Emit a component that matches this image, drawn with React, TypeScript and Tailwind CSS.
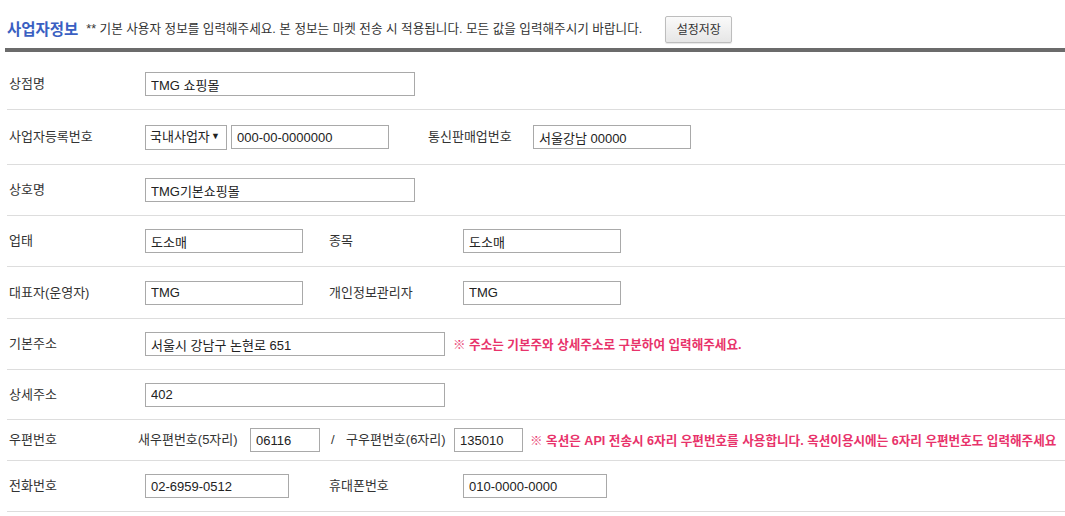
const font = {
  fontFamily: '"Liberation Sans", "Noto Sans CJK KR", sans-serif',
};

function Field({ value, w }: { value: string; w: string }) {
  return (
    <input
      type="text"
      defaultValue={value}
      className={`${w} h-[24px] border border-[#a9a9a9] bg-white px-[5px] text-[13px] text-[#222] outline-none`}
      style={font}
    />
  );
}

function Row({
  label,
  h,
  labelW = "w-[138px]",
  children,
}: {
  label: string;
  h: string;
  labelW?: string;
  children?: React.ReactNode;
}) {
  return (
    <div className={`ml-[7px] flex items-center border-b border-[#dddddd] ${h}`}>
      <div className={`${labelW} shrink-0 pl-[2px] text-[13px] text-[#333]`}>
        {label}
      </div>
      {children}
    </div>
  );
}

function Note({ children }: { children: React.ReactNode }) {
  return (
    <span className="whitespace-nowrap text-[12.6px] font-bold text-[#e8336b]">
      {children}
    </span>
  );
}

export default function App() {
  return (
    <div className="w-[1065px] h-[516px] overflow-hidden bg-white text-[#333]" style={font}>
      <div className="flex h-[48px] items-center pt-[11px] pl-[7px]">
        <span className="text-[15.5px] font-bold text-[#3a5fc2]">사업자정보</span>
        <span className="ml-[8px] whitespace-nowrap text-[12.6px] text-[#333]">
          ** 기본 사용자 정보를 입력해주세요. 본 정보는 마켓 전송 시 적용됩니다. 모든 값을 입력해주시기 바랍니다.
        </span>
        <button
          type="button"
          className="ml-[23px] h-[27px] w-[67px] shrink-0 rounded-[2px] border border-[#bdbdbd] bg-gradient-to-b from-[#fafafa] to-[#e6e6e6] text-[12px] text-[#333] shadow-[0_1px_1px_rgba(0,0,0,0.1)]"
        >
          설정저장
        </button>
      </div>
      <div className="ml-[5px] h-[4px] bg-[#6b6b6b]" />

      <Row label="상점명" h="h-[58px] pt-[7px]">
        <Field value="TMG 쇼핑몰" w="w-[270px]" />
      </Row>

      <Row label="사업자등록번호" h="h-[55px]">
        <div className="flex h-[25px] w-[82px] items-center justify-between border border-[#a9a9a9] bg-white pl-[4px] pr-[6px] text-[13px] text-[#222]">
          <span>국내사업자</span>
          <span className="text-[9px]">▼</span>
        </div>
        <div className="ml-[4px]">
          <Field value="000-00-0000000" w="w-[158px]" />
        </div>
        <div className="ml-[39px] w-[105px] text-[13px] text-[#333]">통신판매업번호</div>
        <Field value="서울강남 00000" w="w-[158px]" />
      </Row>

      <Row label="상호명" h="h-[51px]">
        <Field value="TMG기본쇼핑몰" w="w-[270px]" />
      </Row>

      <Row label="업태" h="h-[51px]">
        <Field value="도소매" w="w-[158px]" />
        <div className="ml-[26px] w-[134px] text-[13px] text-[#333]">종목</div>
        <Field value="도소매" w="w-[158px]" />
      </Row>

      <Row label="대표자(운영자)" h="h-[52px]">
        <Field value="TMG" w="w-[158px]" />
        <div className="ml-[26px] w-[134px] text-[13px] text-[#333]">개인정보관리자</div>
        <Field value="TMG" w="w-[158px]" />
      </Row>

      <Row label="기본주소" h="h-[51px]">
        <Field value="서울시 강남구 논현로 651" w="w-[300px]" />
        <div className="ml-[8px]">
          <Note>※ 주소는 기본주와 상세주소로 구분하여 입력해주세요.</Note>
        </div>
      </Row>

      <Row label="상세주소" h="h-[50px]">
        <Field value="402" w="w-[300px]" />
      </Row>

      <Row label="우편번호" h="h-[41px]" labelW="w-[131px]">
        <span className="w-[112px] text-[13px] text-[#333]">새우편번호(5자리)</span>
        <Field value="06116" w="w-[70px]" />
        <span className="ml-[11px] w-[15px] text-[13px] text-[#333]">/</span>
        <span className="w-[108px] text-[13px] text-[#333]">구우편번호(6자리)</span>
        <Field value="135010" w="w-[69px]" />
        <div className="ml-[7px]">
          <Note>
            ※ 옥션은 API 전송시 6자리 우편번호를 사용합니다. 옥션이용시에는 6자리 우편번호도 입력해주세요
          </Note>
        </div>
      </Row>

      <Row label="전화번호" h="h-[51px]">
        <Field value="02-6959-0512" w="w-[144px]" />
        <div className="ml-[40px] w-[134px] text-[13px] text-[#333]">휴대폰번호</div>
        <Field value="010-0000-0000" w="w-[144px]" />
      </Row>
    </div>
  );
}
